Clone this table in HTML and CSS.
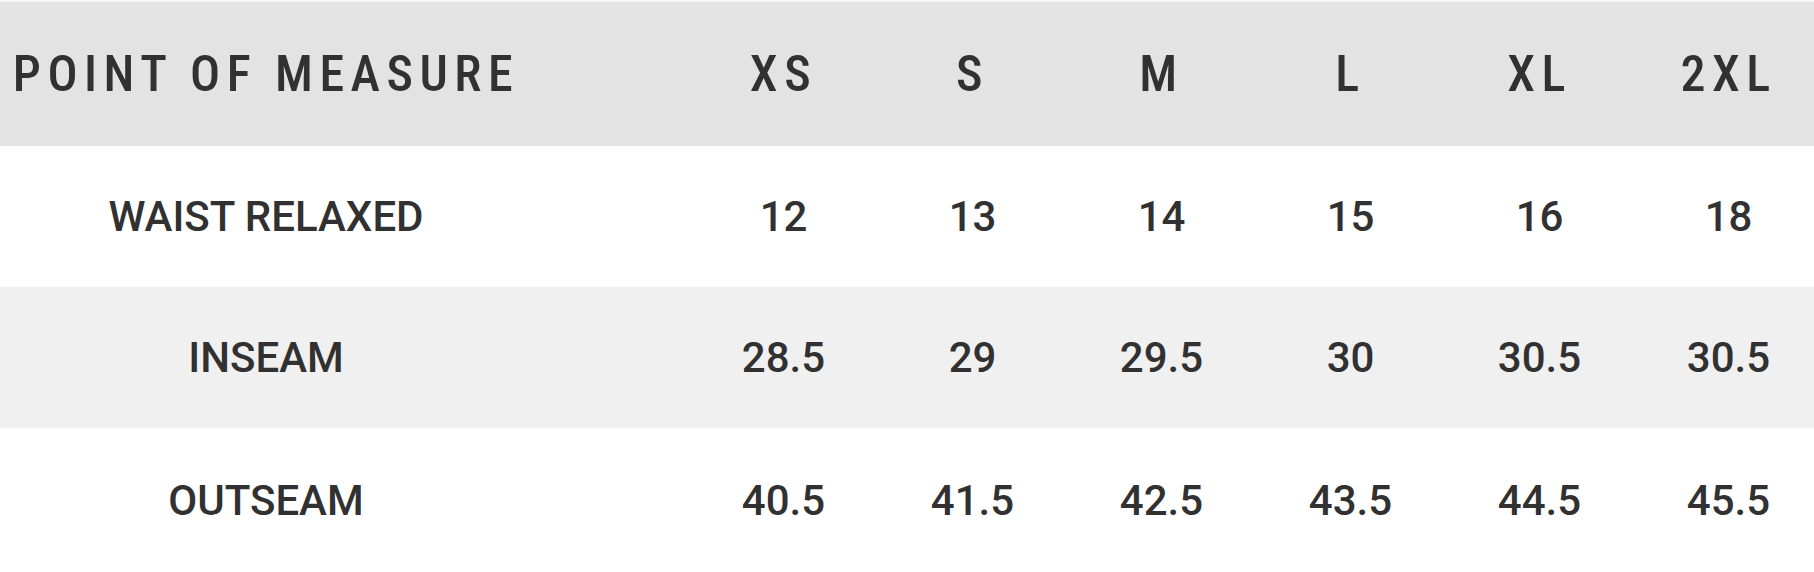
FILE: index.html
```html
<!DOCTYPE html>
<html lang="en">
<head>
<meta charset="utf-8">
<title>Size chart</title>
<link rel="stylesheet" href="styles.css">
</head>
<body>
<div class="frame">
  <div class="chart">
    <div class="row head">
      <div class="cell label">POINT OF MEASURE</div>
      <div class="cell">XS</div>
      <div class="cell">S</div>
      <div class="cell">M</div>
      <div class="cell">L</div>
      <div class="cell">XL</div>
      <div class="cell">2XL</div>
    </div>
    <div class="row body-row">
      <div class="cell label">WAIST RELAXED</div>
      <div class="cell">12</div>
      <div class="cell">13</div>
      <div class="cell">14</div>
      <div class="cell">15</div>
      <div class="cell">16</div>
      <div class="cell">18</div>
    </div>
    <div class="row body-row alt">
      <div class="cell label">INSEAM</div>
      <div class="cell">28.5</div>
      <div class="cell">29</div>
      <div class="cell">29.5</div>
      <div class="cell">30</div>
      <div class="cell">30.5</div>
      <div class="cell">30.5</div>
    </div>
    <div class="row body-row last">
      <div class="cell label">OUTSEAM</div>
      <div class="cell">40.5</div>
      <div class="cell">41.5</div>
      <div class="cell">42.5</div>
      <div class="cell">43.5</div>
      <div class="cell">44.5</div>
      <div class="cell">45.5</div>
    </div>
  </div>
</div>
</body>
</html>
```
FILE: styles.css
```css
html, body {
  margin: 0;
  padding: 0;
  background: #ffffff;
}
body {
  width: 1814px;
  height: 572px;
  overflow: hidden;
  font-family: Roboto, "Noto Sans", "Liberation Sans", sans-serif;
  color: #313131;
}
.frame {
  padding-top: 2px;
  background: #f7f7f7;
}
.chart {
  display: flex;
  flex-direction: column;
  width: 1823px;
}
.row {
  display: grid;
  grid-template-columns: 689px repeat(6, 189px);
  align-items: center;
}
.cell {
  text-align: center;
  white-space: nowrap;
}
.cell.label {
  padding-right: 157px;
}
.head {
  height: 144px;
  background: #e3e3e3;
  font-size: 50px;
  font-weight: 500;
  font-stretch: 86%;
  letter-spacing: 6.5px;
}
.body-row {
  height: 141px;
  background: #ffffff;
  font-size: 42px;
  font-weight: 465;
}
.body-row.alt {
  background: #f0f0f0;
}
.body-row.last {
  height: 144px;
}
```
